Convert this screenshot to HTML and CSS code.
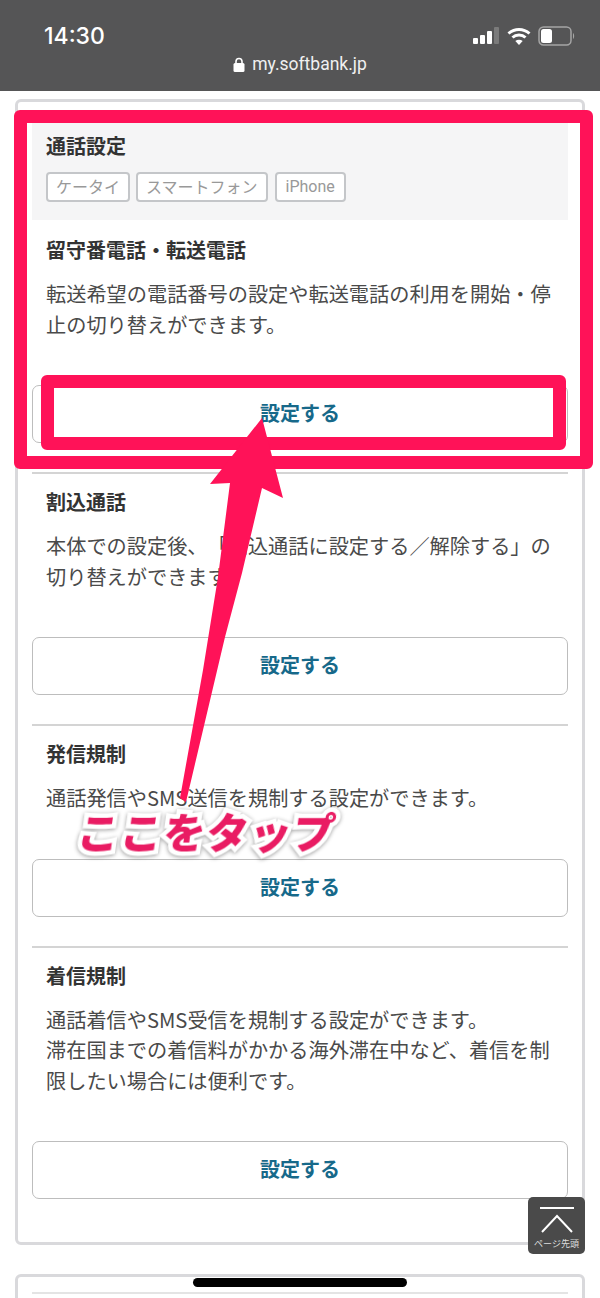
FILE: index.html
```html
<!DOCTYPE html>
<html lang="ja">
<head>
  <meta charset="UTF-8" />
  <meta name="viewport" content="width=device-width, initial-scale=1.0"/>
  <title>my.softbank.jp</title>
  <link rel="stylesheet" href="styles.css">
</head>
<body>

<header class="top-bar">
  <div class="status-row">
    <span class="time">14:30</span>
    <div class="status-icons">
      <svg class="signal" width="27" height="18" viewBox="0 0 27 18">
        <rect x="0" y="11" width="5" height="6" rx="1" fill="#fff"/>
        <rect x="7" y="8" width="5" height="9" rx="1" fill="#fff"/>
        <rect x="14" y="4" width="5" height="13" rx="1" fill="#fff"/>
        <rect x="21" y="0" width="5" height="17" rx="1" fill="#7b7b7b"/>
      </svg>
      <svg class="wifi" width="24" height="18" viewBox="0 0 24 18">
        <path d="M1.5 6.5 C7.5 1 16.5 1 22.5 6.5" fill="none" stroke="#fff" stroke-width="3"/>
        <path d="M5.5 10.5 C9 7.2 15 7.2 18.5 10.5" fill="none" stroke="#fff" stroke-width="3"/>
        <path d="M12 18 L8.3 14 C10.4 12.3 13.6 12.3 15.7 14 Z" fill="#fff"/>
      </svg>
      <svg class="battery" width="37" height="20" viewBox="0 0 37 20">
        <rect x="1" y="1" width="32" height="18" rx="4.5" fill="none" stroke="#a5a5a5" stroke-width="1.5"/>
        <rect x="3" y="3" width="11" height="14" rx="2.5" fill="#fff"/>
        <path d="M35 7 C36.5 8 36.5 12 35 13 Z" fill="#a5a5a5"/>
      </svg>
    </div>
  </div>
  <div class="url-row">
    <svg width="12" height="15" viewBox="0 0 12 15">
      <path d="M3 7 V4.5 a3 3 0 0 1 6 0 V7" fill="none" stroke="#fff" stroke-width="1.6"/>
      <rect x="0.5" y="6" width="11" height="9" rx="1.5" fill="#fff"/>
    </svg>
    <span>my.softbank.jp</span>
  </div>
</header>

<main class="page">
  <div class="card">
    <div class="card-head">
      <h2>通話設定</h2>
      <div class="tags">
        <span class="tag">ケータイ</span>
        <span class="tag">スマートフォン</span>
        <span class="tag tag-latin">iPhone</span>
      </div>
    </div>

    <section class="item item-first">
      <h3>留守番電話・転送電話</h3>
      <p>転送希望の電話番号の設定や転送電話の利用を開始・停止の切り替えができます。</p>
      <a class="btn">設定する</a>
    </section>

    <section class="item">
      <h3>割込通話</h3>
      <p>本体での設定後、「割込通話に設定する／解除する」の切り替えができます。</p>
      <a class="btn">設定する</a>
    </section>

    <section class="item">
      <h3>発信規制</h3>
      <p>通話発信やSMS送信を規制する設定ができます。</p>
      <a class="btn">設定する</a>
    </section>

    <section class="item">
      <h3>着信規制</h3>
      <p>通話着信やSMS受信を規制する設定ができます。<br>滞在国までの着信料がかかる海外滞在中など、着信を制限したい場合には便利です。</p>
      <a class="btn">設定する</a>
    </section>
  </div>

  <div class="card card-next">
    <div class="card-next-line"></div>
  </div>
</main>

<!-- annotations drawn over the page -->
<div class="mark mark-outer"></div>
<div class="mark mark-inner"></div>
<svg class="arrow" width="600" height="1298" viewBox="0 0 600 1298">
  <polygon points="262,418 283,498 262,488 242,573 225,637 186,802 180,798 203,670 218,577 230,483 210,484" fill="#ff1258"/>
</svg>
<div class="tap-label">ここをタップ</div>

<a class="page-top">
  <svg width="38" height="30" viewBox="0 0 38 30">
    <path d="M2 2 H36" stroke="#fff" stroke-width="2"/>
    <path d="M4 26 L19 10 L34 26" fill="none" stroke="#fff" stroke-width="2"/>
  </svg>
  <span>ページ先頭</span>
</a>
<div class="home-bar"></div>

</body>
</html>
```

FILE: styles.css
```css
* {
  box-sizing: border-box;
}

html, body {
  height: 1298px;
  overflow: hidden;
}

body {
  font-family: "Noto Sans CJK JP", "Noto Sans", sans-serif;
  margin: 0;
  background: #fff;
  color: #333;
  position: relative;
  text-spacing-trim: space-all;
}

.top-bar {
  background: #555556;
  color: #fff;
  height: 91px;
  padding: 21px 25px 0 44px;
}

.status-row {
  display: flex;
  justify-content: space-between;
  align-items: center;
  height: 30px;
}

.time {
  font-family: Inter, "Liberation Sans", sans-serif;
  font-size: 23px;
  font-weight: 500;
}

.status-icons {
  display: flex;
  align-items: center;
  gap: 7px;
}

.url-row {
  display: flex;
  justify-content: center;
  align-items: center;
  gap: 7px;
  margin: 3px 0 0 -19px;
  font-family: Roboto, "Liberation Sans", sans-serif;
  font-size: 17.5px;
  color: #f0f0f0;
}

.page {
  padding: 8px 15px 0;
}

.card {
  border: 3px solid #d9d9dc;
  border-radius: 6px;
  padding: 0 14px;
  height: 1146px;
}

.card-head {
  background: #f5f5f6;
  margin-top: 10px;
  padding: 21px 14px 0;
  height: 108px;
}

h2, h3 {
  font-size: 20px;
  font-weight: 700;
  line-height: 30px;
  margin: 0;
  color: #333;
}

h2 {
  margin-top: -2px;
}

.tags {
  display: flex;
  gap: 6px;
  margin-top: 11px;
}

.tag {
  background: #fff;
  border: 2px solid #c4c6c9;
  border-radius: 4px;
  color: #999;
  font-size: 16px;
  height: 30px;
  line-height: 25px;
  padding: 0 8px;
}

.tag-latin {
  font-family: Roboto, "Liberation Sans", sans-serif;
  margin-left: 1px;
  padding: 0 9px;
  line-height: 26px;
}

.item {
  border-top: 2px solid #d4d4d4;
  padding: 13px 0 29px;
}

.item-first {
  border-top: none;
  padding-top: 15px;
}

.item h3 {
  padding-left: 14px;
}

.item p {
  font-size: 20.2px;
  line-height: 30.5px;
  margin: 14px 0 45px;
  padding: 0 14px;
  color: #4a4a4a;
  font-weight: 400;
}

.btn {
  display: block;
  height: 58px;
  border: 1.5px solid #bdbdbd;
  border-radius: 7px;
  color: #17698a;
  font-size: 20px;
  font-weight: 700;
  line-height: 53px;
  text-align: center;
}

.card-next {
  margin-top: 29px;
  height: 60px;
  padding-top: 15px;
}

.card-next-line {
  height: 2px;
  background: #e4e4e4;
}

.mark {
  position: absolute;
  border-style: solid;
  border-color: #ff1258;
  border-radius: 6px;
}

.mark-outer {
  left: 14px;
  top: 110px;
  width: 579px;
  height: 359px;
  border-width: 13px;
}

.mark-inner {
  left: 41px;
  top: 375px;
  width: 525px;
  height: 75px;
  border-width: 13px;
}

.arrow {
  position: absolute;
  left: 0;
  top: 0;
}

.tap-label {
  position: absolute;
  left: 78px;
  top: 801px;
  font-size: 42px;
  font-weight: 900;
  line-height: 60px;
  letter-spacing: 1px;
  white-space: nowrap;
  color: #e91c63;
  -webkit-text-stroke: 9px #fff;
  paint-order: stroke fill;
  transform: skewX(-8deg);
  filter: drop-shadow(0 1px 2px rgba(0,0,0,0.4));
}

.page-top {
  position: absolute;
  left: 528px;
  top: 1197px;
  width: 57px;
  height: 57px;
  background: #4a4a4a;
  border-radius: 5px;
  color: #ddd;
  display: flex;
  flex-direction: column;
  align-items: center;
  padding-top: 9px;
}

.page-top span {
  font-size: 9px;
  line-height: 12px;
  margin-top: 2px;
  white-space: nowrap;
}

.home-bar {
  position: absolute;
  left: 193px;
  top: 1278px;
  width: 214px;
  height: 9px;
  background: #000;
  border-radius: 5px;
}
```
